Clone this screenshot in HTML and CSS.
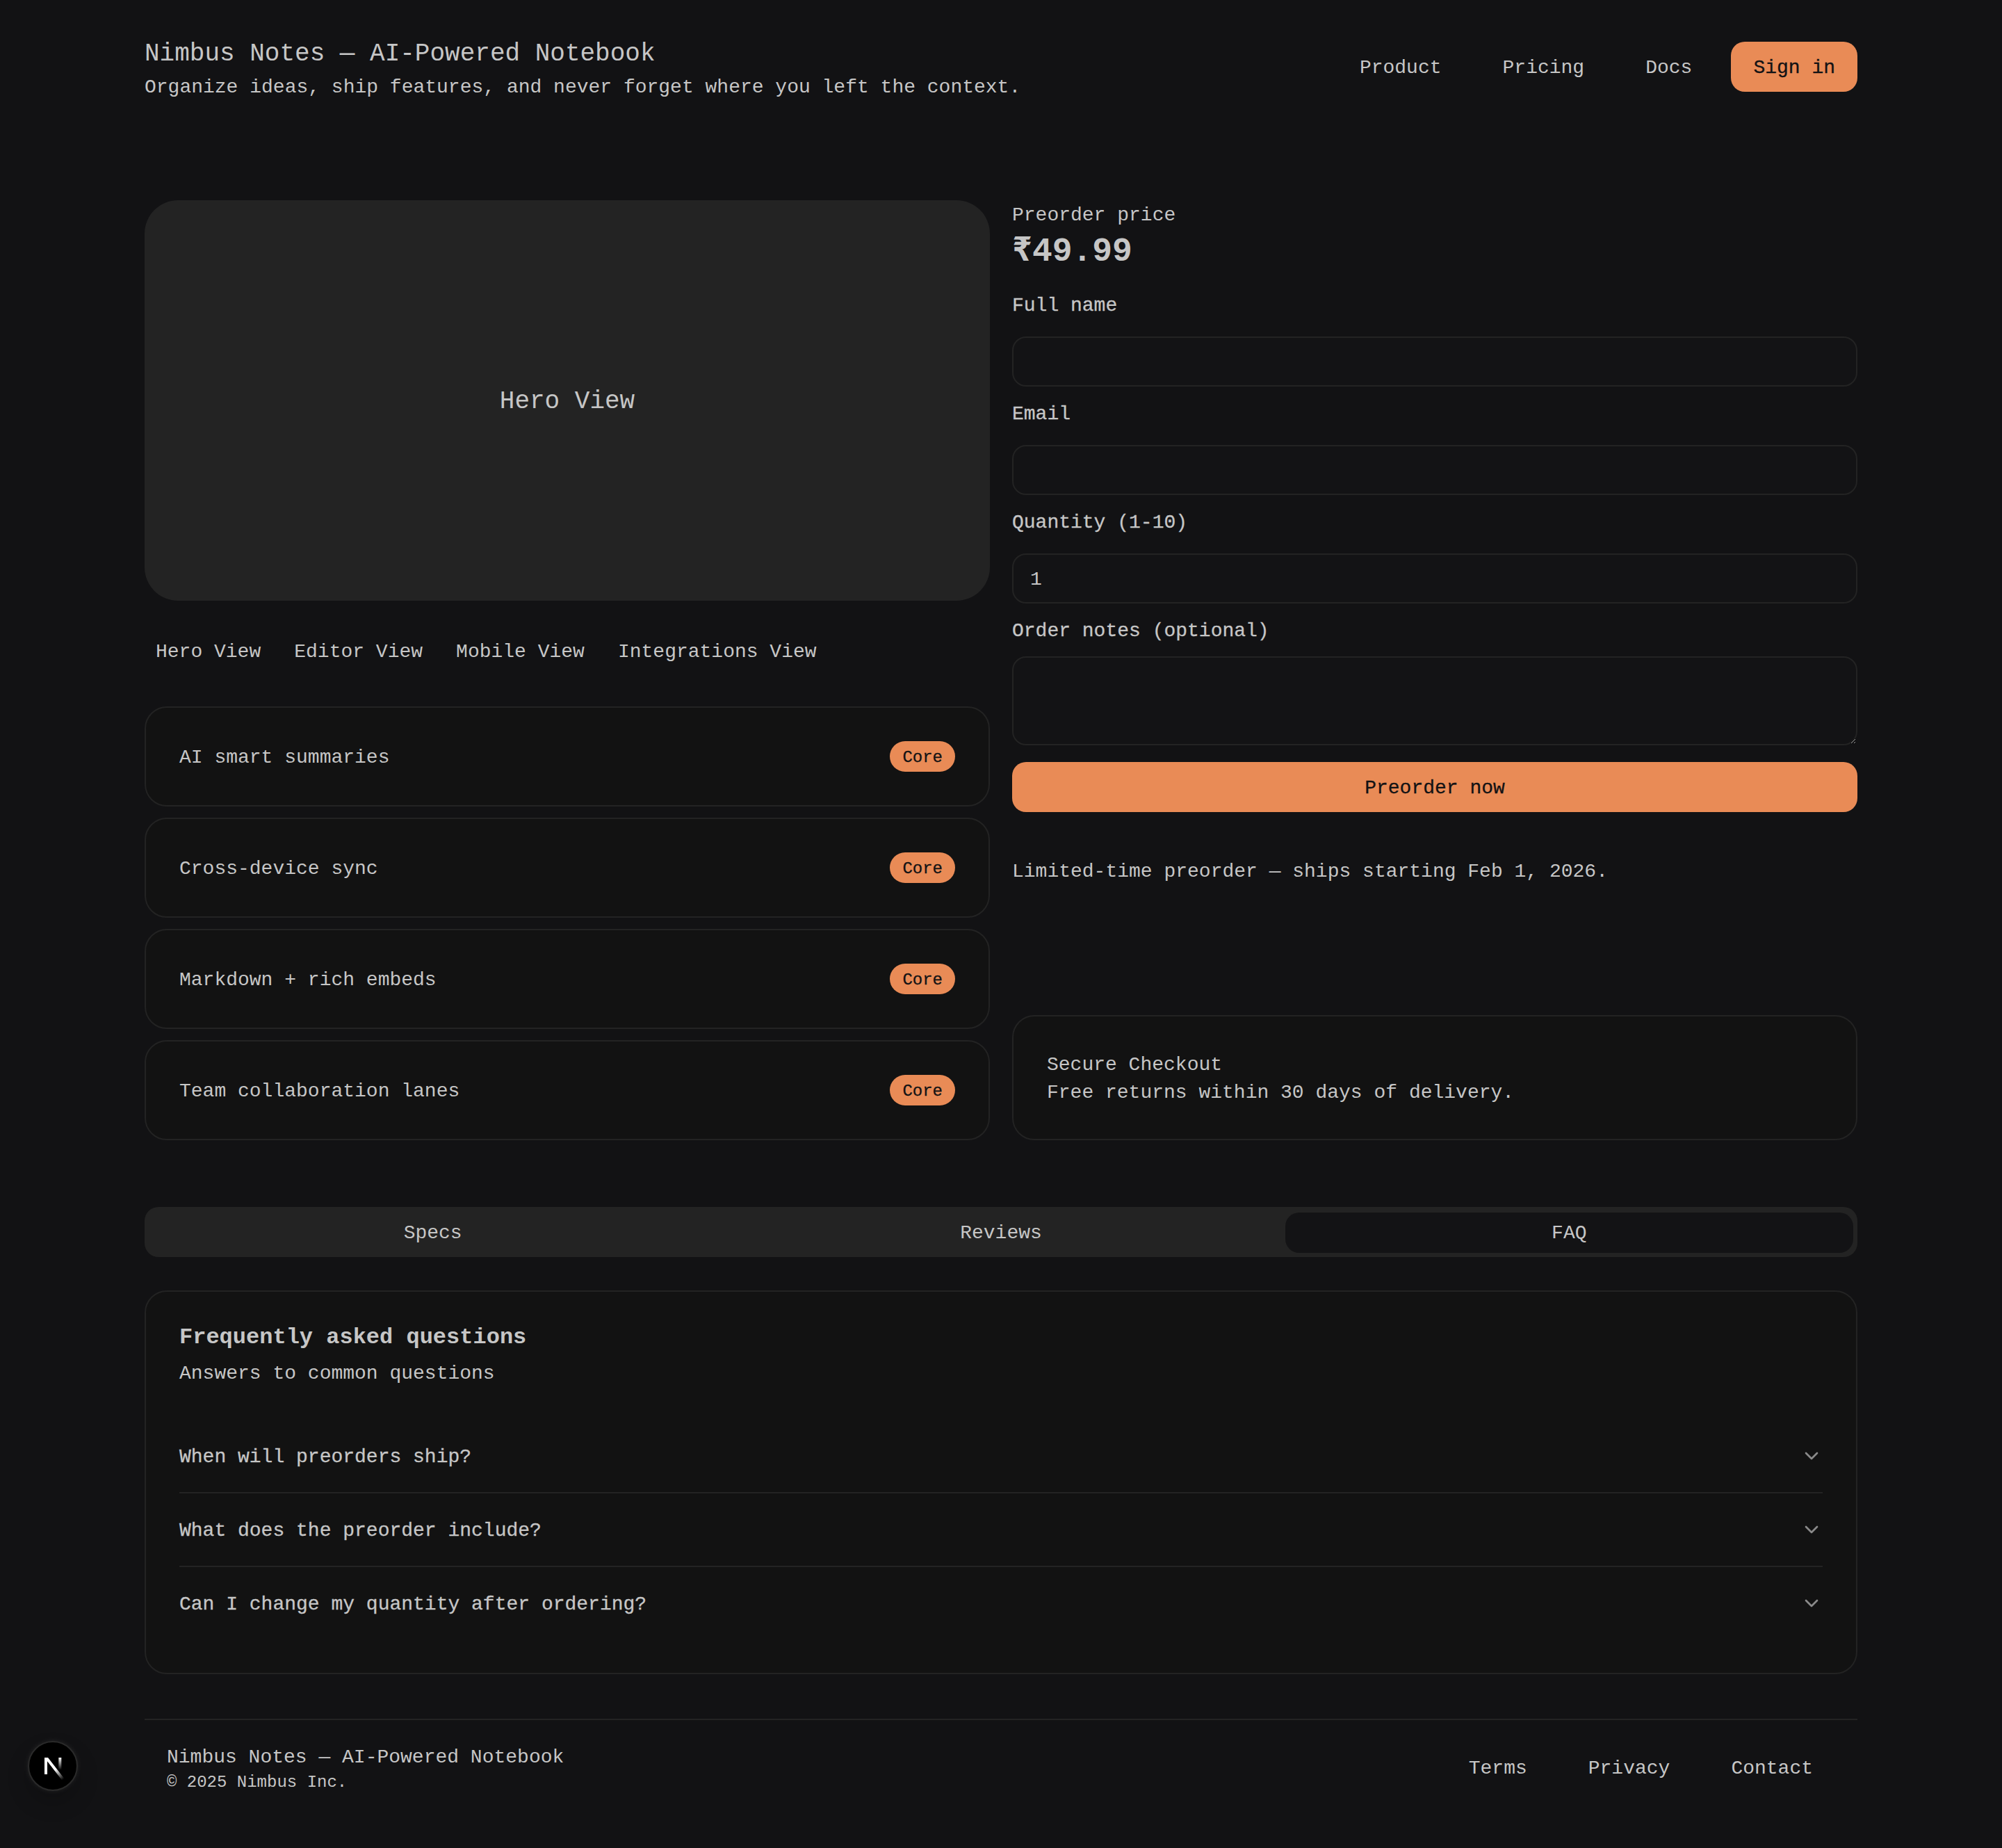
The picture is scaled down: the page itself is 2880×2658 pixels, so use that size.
FILE: index.html
```html
<!DOCTYPE html>
<html lang="en">
<head>
    <meta charset="UTF-8">
    <title>Nimbus Notes</title>
    <link rel="stylesheet" href="styles.css">
</head>
<body>

<div class="page">
    <header class="site-header">
        <div class="heading">
            <h1 class="brand">Nimbus Notes — AI-Powered Notebook</h1>
            <p class="tagline">Organize ideas, ship features, and never forget where you left the context.</p>
        </div>
        <nav class="nav">
            <a class="link" href="#">Product</a>
            <a class="link" href="#">Pricing</a>
            <a class="link" href="#">Docs</a>
            <button type="button" class="btn btn-small">Sign in</button>
        </nav>
    </header>

    <main>
        <section class="product">
            <div class="gallery">
                <div class="hero">Hero View</div>
                <div class="thumbs">
                    <button type="button" class="thumb">Hero View</button>
                    <button type="button" class="thumb">Editor View</button>
                    <button type="button" class="thumb">Mobile View</button>
                    <button type="button" class="thumb">Integrations View</button>
                </div>
                <ul class="features">
                    <li class="feature"><span class="feature-name">AI smart summaries</span><span class="badge">Core</span></li>
                    <li class="feature"><span class="feature-name">Cross-device sync</span><span class="badge">Core</span></li>
                    <li class="feature"><span class="feature-name">Markdown + rich embeds</span><span class="badge">Core</span></li>
                    <li class="feature"><span class="feature-name">Team collaboration lanes</span><span class="badge">Core</span></li>
                </ul>
            </div>

            <div class="buy">
                <div class="price-box">
                    <p>Preorder price</p>
                    <p class="price">₹49.99</p>
                </div>
                <form class="order">
                    <label class="field-label" for="fname">Full name</label>
                    <input class="control" id="fname" type="text">
                    <label class="field-label" for="email">Email</label>
                    <input class="control" id="email" type="email">
                    <label class="field-label" for="qty">Quantity (1-10)</label>
                    <input class="control" id="qty" type="number" min="1" max="10" value="1">
                    <label class="field-label notes-label" for="notes">Order notes (optional)</label>
                    <textarea class="control notes" id="notes"></textarea>
                    <button type="button" class="btn btn-wide">Preorder now</button>
                </form>
                <p class="ships">Limited-time preorder — ships starting Feb 1, 2026.</p>
                <div class="secure">
                    <p>Secure Checkout</p>
                    <p>Free returns within 30 days of delivery.</p>
                </div>
            </div>
        </section>

        <div class="tabs">
            <button type="button" class="tab">Specs</button>
            <button type="button" class="tab">Reviews</button>
            <button type="button" class="tab active">FAQ</button>
        </div>

        <section class="panel">
            <h2 class="panel-title">Frequently asked questions</h2>
            <p class="panel-sub">Answers to common questions</p>
            <div class="faq">
                <div class="faq-row">
                    <span class="faq-q">When will preorders ship?</span>
                    <svg class="chevron" viewBox="0 0 24 24"><path d="m6 9 6 6 6-6"/></svg>
                </div>
                <div class="faq-row">
                    <span class="faq-q">What does the preorder include?</span>
                    <svg class="chevron" viewBox="0 0 24 24"><path d="m6 9 6 6 6-6"/></svg>
                </div>
                <div class="faq-row">
                    <span class="faq-q">Can I change my quantity after ordering?</span>
                    <svg class="chevron" viewBox="0 0 24 24"><path d="m6 9 6 6 6-6"/></svg>
                </div>
            </div>
        </section>
    </main>

    <footer class="site-footer">
        <div class="heading">
            <p class="footer-name">Nimbus Notes — AI-Powered Notebook</p>
            <p class="footer-copy">© 2025 Nimbus Inc.</p>
        </div>
        <nav class="nav">
            <a class="link" href="#">Terms</a>
            <a class="link" href="#">Privacy</a>
            <a class="link" href="#">Contact</a>
        </nav>
    </footer>
</div>

<div class="dev-badge">
    <svg width="60" height="60" viewBox="0 0 180 180" fill="none">
        <defs>
            <linearGradient id="nDiag" gradientUnits="userSpaceOnUse" x1="100" y1="105" x2="135" y2="148">
                <stop stop-color="#fff"/>
                <stop offset="1" stop-color="#fff" stop-opacity="0"/>
            </linearGradient>
            <linearGradient id="nBar" gradientUnits="userSpaceOnUse" x1="121" y1="54" x2="120.8" y2="106.9">
                <stop stop-color="#fff"/>
                <stop offset="1" stop-color="#fff" stop-opacity="0"/>
            </linearGradient>
        </defs>
        <path d="M149.5 157.5 69.1 54H54v72h12.1V69.4l73.9 95.4c3.3-2.2 6.5-4.7 9.5-7.3Z" fill="url(#nDiag)"/>
        <rect x="115" y="54" width="12" height="72" fill="url(#nBar)"/>
    </svg>
</div>

</body>
</html>
```

FILE: styles.css
```css
*{box-sizing:border-box}
html,body{margin:0;padding:0}
body{
    background:#121214;
    color:#c6c6c6;
    font-family:"Liberation Mono",monospace;
    font-size:28px;
    line-height:40px;
}
h1,h2,p,ul{margin:0;padding:0}
ul{list-style:none}
button,input,textarea{font:inherit;color:inherit}
a{color:inherit;text-decoration:none}

.page{
    width:2464px;
    margin:0 auto;
    padding-bottom:48px;
}

/* header */
.site-header{
    display:flex;
    justify-content:space-between;
    align-items:center;
    height:192px;
}
.heading{margin-top:4px}
.brand{
    font-size:36px;
    line-height:56px;
    font-weight:normal;
}
.nav{
    display:flex;
    align-items:center;
    gap:24px;
}
.link{padding:4px 32px 0}
.btn{
    border:none;
    border-radius:20px;
    background:#e98b56;
    color:#121214;
    height:72px;
    padding-top:4px;
    -webkit-text-stroke:0.3px #121214;
}
.btn-small{padding-left:32px;padding-right:32px}
.btn-wide{
    width:100%;
    margin-top:24px;
}

/* product area */
.product{
    display:grid;
    grid-template-columns:1216px 1216px;
    gap:32px;
    padding-top:96px;
}
.hero{
    height:576px;
    padding-top:4px;
    border-radius:48px;
    background:#232323;
    display:flex;
    justify-content:center;
    align-items:center;
    font-size:36px;
}
.thumbs{
    display:flex;
    gap:16px;
    margin-top:32px;
}
.thumb{
    border:none;
    background:none;
    padding:22px 16px 18px;
}
.features{
    display:flex;
    flex-direction:column;
    gap:16px;
    margin-top:40px;
}
.feature{
    height:144px;
    padding:0 48px;
    display:flex;
    justify-content:space-between;
    align-items:center;
    background:#121212;
    border:2px solid #232323;
    border-radius:32px;
}
.feature-name{padding-top:4px}
.badge{
    height:44px;
    padding:4px 18px 0;
    border-radius:22px;
    background:#e98b56;
    color:#121214;
    font-size:24px;
    line-height:40px;
    -webkit-text-stroke:0.3px #121214;
}

/* order form */
.buy{
    display:flex;
    flex-direction:column;
}
.price-box{padding-top:2px}
.price{
    font-size:48px;
    line-height:64px;
    font-weight:bold;
}
.order{
    display:flex;
    flex-direction:column;
    margin-top:26px;
}
.field-label{
    margin-bottom:24px;
    -webkit-text-stroke:0.3px #c6c6c6;
}
.control{
    height:72px;
    margin-bottom:20px;
    padding:2px 24px 0;
    background:#131315;
    border:2px solid #232323;
    border-radius:20px;
    outline:none;
}
.notes-label{margin-bottom:16px}
.notes{
    height:128px;
    margin-bottom:0;
    padding:16px 24px;
}
.ships{margin-top:66px}
.secure{
    margin-top:auto;
    padding:50px 48px 46px;
    background:#121212;
    border:2px solid #232323;
    border-radius:32px;
}

/* tabs */
.tabs{
    display:grid;
    grid-template-columns:repeat(3,1fr);
    height:72px;
    margin-top:96px;
    padding:8px 6px 6px;
    background:#232323;
    border-radius:20px;
}
.tab{
    border:none;
    background:none;
    border-radius:20px;
    padding:2px 0 0;
}
.tab.active{background:#131315}

/* faq panel */
.panel{
    margin-top:48px;
    padding:42px 48px 48px;
    background:#121212;
    border:2px solid #232323;
    border-radius:32px;
}
.panel-title{
    font-size:32px;
    line-height:48px;
}
.panel-sub{margin-top:8px}
.faq{margin-top:46px}
.faq-row{
    height:106px;
    display:flex;
    justify-content:space-between;
    align-items:center;
    border-bottom:2px solid #232323;
}
.faq-row:last-child{
    height:104px;
    border-bottom:none;
}
.faq-q{
    padding-top:4px;
    -webkit-text-stroke:0.3px #c6c6c6;
}
.chevron{
    width:32px;
    height:32px;
    fill:none;
    stroke:#8a8a8a;
    stroke-width:2;
    stroke-linecap:round;
    stroke-linejoin:round;
}

/* footer */
.site-footer{
    display:flex;
    justify-content:space-between;
    align-items:center;
    margin-top:64px;
    padding:30px 32px;
    border-top:2px solid #232323;
}
.footer-copy{
    font-size:24px;
    line-height:32px;
}

/* floating dev badge */
.dev-badge{
    position:fixed;
    left:40px;
    bottom:82px;
    width:72px;
    height:72px;
    border-radius:50%;
    background:#000;
    border:2px solid #2a2a2a;
    box-shadow:0 0 6px rgba(255,255,255,0.08),0 16px 32px rgba(0,0,0,0.2);
    display:flex;
    justify-content:center;
    align-items:center;
}
```
